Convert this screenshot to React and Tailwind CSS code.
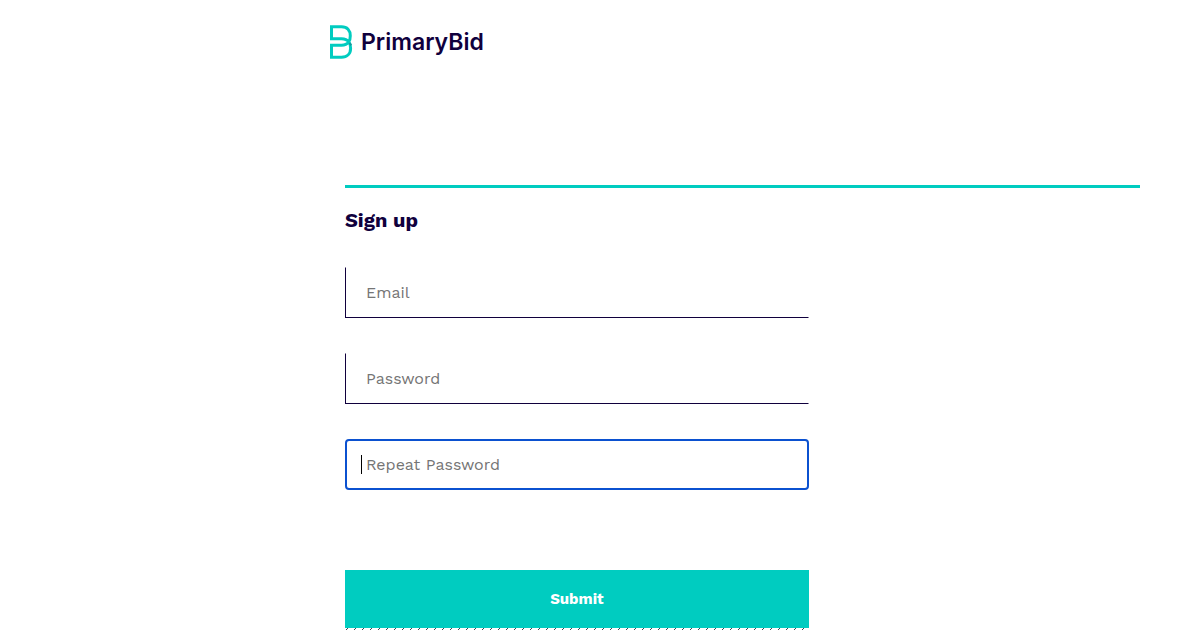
function Logo() {
  return (
    <a href="/" aria-label="PrimaryBid" className="flex h-[34px] items-center gap-2">
      <svg width="23" height="34" viewBox="0 0 23 34" fill="none" aria-hidden="true">
        <g stroke="#00ccc0" strokeWidth="3">
          <path d="M0 13.8H11.5C14.8 13.8 17.4 15 19 17.2C20.2 18.8 20.6 21 20.6 23.2C20.6 28.8 17.2 32.2 11.5 32.2H1.5V20.2H11.5C14.8 20.2 17.2 19 18.8 16.8C20 15 20.3 13 20.3 10.8C20.3 5.2 17.2 1.8 11.5 1.8H1.5V13.8" />
        </g>
        <path d="M19.6 18.2L21.2 20.4" stroke="#169a9d" strokeWidth="2" />
      </svg>
      <span className="font-[Inter,sans-serif] text-[23px] leading-8 font-semibold text-[#10003d]">PrimaryBid</span>
    </a>
  );
}

const plainField =
  "block h-[51px] w-full border border-t-transparent border-r-transparent border-b-[#10003d] border-l-[#10003d] bg-white px-5 text-base text-[#10003d] outline-none placeholder:text-[#757575]";
const activeField =
  "block h-[51px] w-full rounded-[4px] border-2 border-[#0b51d0] bg-white px-[19px] text-base text-[#10003d] caret-transparent outline-none placeholder:text-[#757575]";

function Field({ id, label, type, active }) {
  return (
    <div className="relative">
      <input id={id} type={type} aria-label={label} placeholder={label} className={active ? activeField : plainField} />
      {active && <span aria-hidden="true" className="absolute top-4 left-4 h-[19px] w-px bg-black" />}
    </div>
  );
}

export default function App() {
  return (
    <div className="bg-white pr-[45px] pl-[27.5%] font-['Work_Sans',Inter,sans-serif] text-[#10003d]">
      <header className="pt-[25px]">
        <Logo />
      </header>
      <main className="px-[15px] pt-[126px]">
        <div className="border-t-[3px] border-[#00ccc0] pt-[17px]">
          <h1 className="text-xl leading-[30px] font-bold">Sign up</h1>
        </div>
        <div className="grid grid-cols-12">
          <form className="col-span-7 flex flex-col gap-[35px] pt-8">
            <Field id="email" label="Email" type="email" />
            <Field id="password" label="Password" type="password" />
            <Field id="repeat-password" label="Repeat Password" type="password" active />
            <div className="pt-[45px]">
              <button type="submit" className="block h-[58px] w-full bg-[#00ccc0] text-[15px] font-bold text-white">
                Submit
              </button>
              <svg className="block h-[2px] w-full" aria-hidden="true">
                <defs>
                  <pattern id="hatch" width="8" height="8" patternUnits="userSpaceOnUse">
                    <path d="M0.5 2.5L3 0" stroke="#444450" strokeWidth="1" />
                  </pattern>
                </defs>
                <rect width="100%" height="100%" fill="url(#hatch)" />
              </svg>
            </div>
          </form>
        </div>
      </main>
    </div>
  );
}
